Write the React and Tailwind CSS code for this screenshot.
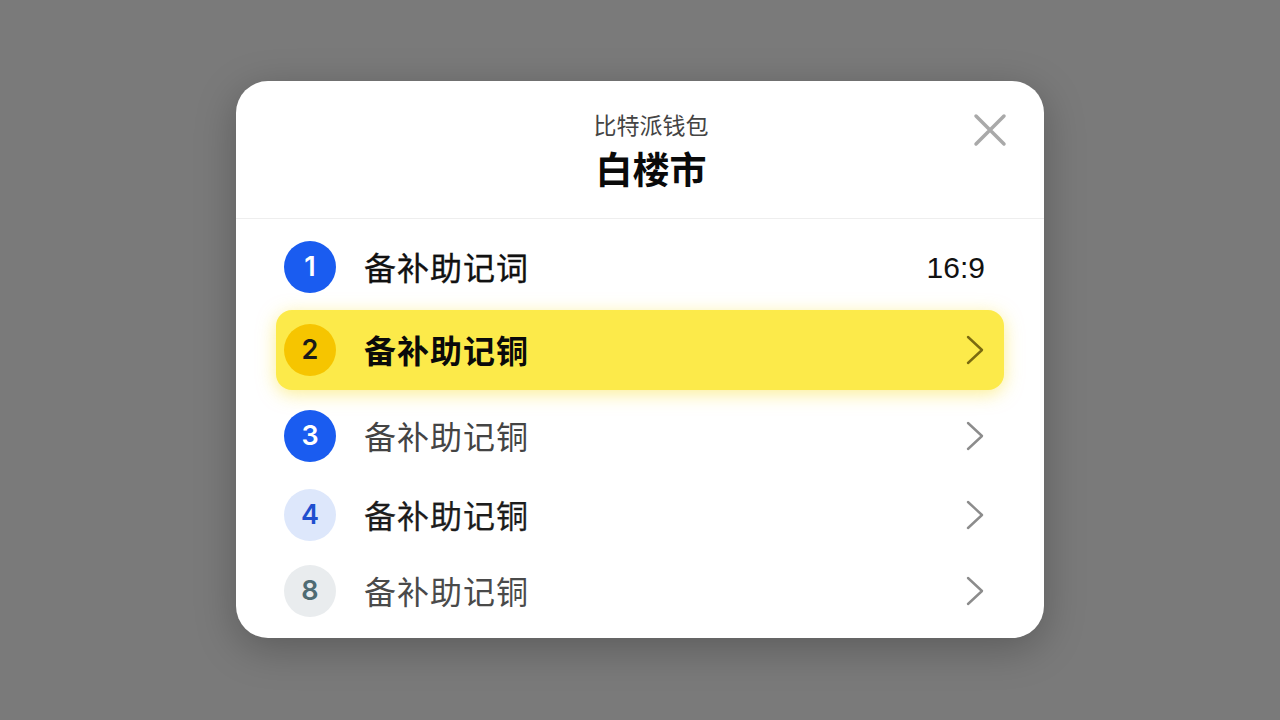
const font = { fontFamily: '"Noto Sans CJK SC", "Noto Sans", sans-serif' };

const rows = [
  { n: "1", label: "备补助记词", h: "h-[86px]", circle: "bg-[#1a5cf0] text-white", text: "text-[#111] font-normal [-webkit-text-stroke:0.35px_#111]", right: "time" },
  { n: "2", label: "备补助记铜", h: "h-[80px]", circle: "bg-[#f6c500] text-[#1a1a1a]", text: "text-[#0a0a0a] font-bold", active: true },
  { n: "3", label: "备补助记铜", h: "h-[92px]", circle: "bg-[#1a5cf0] text-white", text: "text-[#444] font-normal" },
  { n: "4", label: "备补助记铜", h: "h-[66px]", circle: "bg-[#dde7fb] text-[#1f4fcf]", text: "text-[#1c1c1c] font-normal [-webkit-text-stroke:0.25px_#1c1c1c]" },
  { n: "8", label: "备补助记铜", h: "h-[86px]", circle: "bg-[#e9ecee] text-[#4f6b73]", text: "text-[#4a4a4a] font-normal" },
];

function Chevron({ color }) {
  return (
    <svg width="20" height="30" viewBox="0 0 20 30" fill="none">
      <path d="M3 2L17 15L3 28" stroke={color} strokeWidth="2.4" strokeLinecap="round" strokeLinejoin="round" />
    </svg>
  );
}

function Row({ row }) {
  return (
    <div
      className={`flex items-center ${row.h} ${
        row.active
          ? "bg-[#fcea4a] rounded-[16px] shadow-[0_4px_18px_rgba(250,225,60,0.55)]"
          : ""
      } pl-[8px] pr-[19px]`}
    >
      <div
        className={`w-[52px] h-[52px] rounded-full flex items-center justify-center text-[27px] font-semibold ${row.circle}`}
        style={{ fontFamily: "Inter, Roboto, sans-serif" }}
      >
        {row.n}
      </div>
      <span className={`ml-[28px] -mt-[2px] text-[32px] leading-none tracking-[1px] ${row.text}`}>{row.label}</span>
      <div className="ml-auto flex items-center">
        {row.right === "time" ? (
          <span
            className="text-[30px] text-[#111]"
            style={{ fontFamily: '"Liberation Sans", Arial, sans-serif' }}
          >
            16:9
          </span>
        ) : (
          <Chevron color={row.active ? "#7a6a10" : "#8c8c8c"} />
        )}
      </div>
    </div>
  );
}

export default function App() {
  return (
    <div className="w-[1280px] h-[720px] bg-[#7a7a7a] flex justify-center pt-[81px]" style={font}>
      <div className="w-[808px] h-[557px] bg-white rounded-[32px] shadow-[0_10px_40px_rgba(0,0,0,0.25)] flex flex-col">
        {/* header */}
        <div className="relative h-[138px] flex flex-col items-center pl-[22px] border-b border-[#eeeeee]">
          <div className="mt-[28px] text-[23px] leading-[30px] text-[#444]">比特派钱包</div>
          <div className="mt-[6px] text-[37px] leading-[46px] font-bold text-[#0a0a0a]">白楼市</div>
          <button className="absolute right-[36px] top-[31px] w-[36px] h-[36px] flex items-center justify-center">
            <svg width="34" height="34" viewBox="0 0 34 34" fill="none">
              <path d="M3 3L31 31M31 3L3 31" stroke="#a9a9a9" strokeWidth="3.5" strokeLinecap="round" />
            </svg>
          </button>
        </div>
        {/* list */}
        <div className="flex flex-col px-[40px] pt-[5px]">
          {rows.map((r) => (
            <Row key={r.n} row={r} />
          ))}
        </div>
      </div>
    </div>
  );
}
